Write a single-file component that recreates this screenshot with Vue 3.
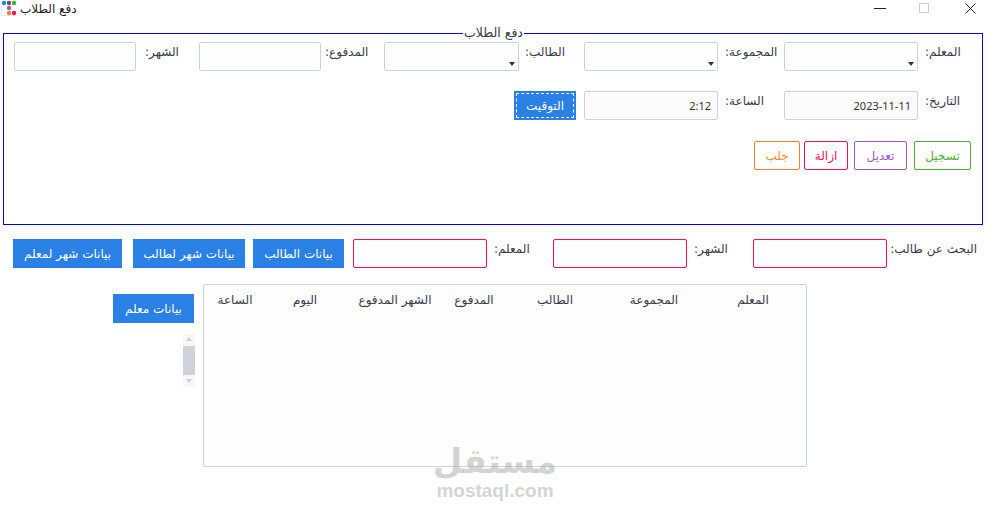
<script setup>
const columns = [
  { t: 'الساعة', w: 62 },
  { t: 'اليوم', w: 78 },
  { t: 'الشهر المدفوع', w: 102 },
  { t: 'المدفوع', w: 56 },
  { t: 'الطالب', w: 106 },
  { t: 'المجموعة', w: 92 },
  { t: 'المعلم', w: 106 },
]
</script>

<template>
  <div class="window">
    <header class="titlebar">
      <svg class="appicon" width="16" height="16" viewBox="0 0 16 16">
        <path d="M.5 2V15.5H15.5" fill="none" stroke="#e6e6e6" />
        <circle cx="3" cy="3" r="2.2" fill="#2a80e4" />
        <circle cx="8" cy="3" r="2.2" fill="#555b66" />
        <circle cx="13" cy="3" r="2.2" fill="#4caf30" />
        <circle cx="8" cy="8" r="2.2" fill="#9b59c4" />
        <circle cx="8" cy="13" r="2.2" fill="#ff7f27" />
        <circle cx="13" cy="13" r="2.2" fill="#f0104f" />
      </svg>
      <span class="title">دفع الطلاب</span>
      <div class="winbtns">
        <svg width="12" height="12" viewBox="0 0 12 12"><path d="M0 6.5H12" stroke="#222" /></svg>
        <svg class="maxi" width="12" height="12" viewBox="0 0 12 12"><rect x="1.5" y="1.5" width="9" height="9" fill="none" stroke="#ccc" /></svg>
        <svg width="12" height="12" viewBox="0 0 12 12"><path d="M.5 1.5L10.5 11.5M10.5 1.5L.5 11.5" stroke="#222" fill="none" /></svg>
      </div>
    </header>

    <fieldset class="group">
      <legend>دفع الطلاب</legend>
      <div class="row r1">
        <div class="box w122"></div>
        <label class="lab w63 p9">الشهر:</label>
        <div class="box w122"></div>
        <label class="lab w63 p4">المدفوع:</label>
        <div class="box combo w135"><i class="tri"></i></div>
        <label class="lab w65 p6">الطالب:</label>
        <div class="box combo w134"><i class="tri"></i></div>
        <label class="lab w66 p7">المجموعة:</label>
        <div class="box combo w134"><i class="tri"></i></div>
        <label class="lab w60 p7">المعلم:</label>
      </div>
      <div class="row r2">
        <button class="primary focus">التوقيت</button>
        <div class="box w134 val">2:12</div>
        <label class="lab w66 p7">الساعة:</label>
        <div class="box w134 val">2023-11-11</div>
        <label class="lab w60 p7">التاريخ:</label>
      </div>
      <div class="row r3">
        <button class="outline orange">جلب</button>
        <button class="outline red">ازالة</button>
        <button class="outline purple">تعديل</button>
        <button class="outline green">تسجيل</button>
      </div>
    </fieldset>

    <div class="searchrow">
      <button class="primary b109">بيانات شهر لمعلم</button>
      <button class="primary b112">بيانات شهر لطالب</button>
      <button class="primary b91">بيانات الطالب</button>
      <div class="box pink"></div>
      <label class="lab w66 p7">المعلم:</label>
      <div class="box pink"></div>
      <label class="lab w66 p7">الشهر:</label>
      <div class="box pink"></div>
      <label class="lab w90 p7">البحث عن طالب:</label>
    </div>

    <div class="lower">
      <div class="side">
        <button class="primary b81">بيانات معلم</button>
        <div class="scroll">
          <span class="arr up"></span>
          <span class="thumb"></span>
          <span class="arr down"></span>
        </div>
      </div>
      <div class="table">
        <div class="thead">
          <span v-for="c in columns" :key="c.t" :style="{ width: c.w + 'px' }">{{ c.t }}</span>
        </div>
      </div>
    </div>

    <div class="watermark">
      <span class="wm-ar">مستقل</span>
      <span class="wm-en">mostaql.com</span>
    </div>
  </div>
</template>

<style>
html, body { margin: 0; background: #fff; }
</style>

<style scoped>
.window {
  position: relative;
  width: 989px;
  height: 511px;
  overflow: hidden;
  background: #fff;
  font-family: "DejaVu Sans", "Noto Sans", sans-serif;
  font-size: 12px;
  color: #3a3a4a;
}
.titlebar {
  height: 18px;
  display: flex;
  align-items: flex-start;
  padding-left: 1px;
}
.appicon { flex: none; }
.title {
  margin: 1px 0 0 3px;
  color: #222;
  line-height: 16px;
}
.winbtns {
  margin-left: auto;
  margin-right: 12px;
  margin-top: 2px;
  display: flex;
}
.maxi { margin: 0 35px 0 32px; }
.group {
  box-sizing: border-box;
  margin: 8px 0 0 3px;
  padding: 0 0 0 10px;
  width: 980px;
  height: 199px;
  border: 1px solid #0000e6;
  position: relative;
  min-width: 0;
}
legend {
  margin: 0 0 0 449px;
  padding: 0 1px;
  line-height: 14px;
  font-size: 12.5px;
  color: #3a3a4a;
}
.row { display: flex; align-items: flex-start; }
.r1 { margin-top: 2px; }
.r2 { margin-top: 20px; padding-left: 500px; }
.r3 { margin-top: 21px; padding-left: 740px; }
.box {
  box-sizing: border-box;
  height: 29px;
  flex: none;
  border: 1px solid #ced2da;
  border-radius: 2px;
  background: #fdfdfd;
}
.w122 { width: 122px; }
.w134 { width: 134px; }
.w135 { width: 135px; }
.combo {
  display: flex;
  justify-content: flex-end;
  align-items: flex-end;
  padding: 0 3px 4px 0;
}
.tri {
  width: 0;
  height: 0;
  border-left: 3.5px solid transparent;
  border-right: 3.5px solid transparent;
  border-top: 4px solid #333;
}
.val {
  font-family: "Noto Sans", sans-serif;
  font-size: 11px;
  line-height: 27px;
  text-align: right;
  padding-right: 6px;
  background: #fcfcfc;
  color: #333;
}
.lab {
  box-sizing: border-box;
  flex: none;
  padding-top: 2px;
  line-height: 17px;
  white-space: nowrap;
  direction: rtl;
  text-align: left;
}
.w60 { width: 60px; }
.w63 { width: 63px; }
.w65 { width: 65px; }
.w66 { width: 66px; }
.w90 { width: 90px; }
.p4 { padding-left: 4px; }
.p6 { padding-left: 6px; }
.p7 { padding-left: 7px; }
.p9 { padding-left: 9px; }
button {
  font-family: inherit;
  font-size: 12px;
  box-sizing: border-box;
  height: 29px;
  padding: 0;
  cursor: pointer;
  flex: none;
}
.primary {
  background: #2a80e4;
  border: none;
  color: #fff;
  position: relative;
}
.b81 { width: 81px; }
.b91 { width: 91px; }
.b109 { width: 109px; }
.b112 { width: 112px; }
.focus {
  width: 62px;
  margin-right: 8px;
}
.focus::after {
  content: "";
  position: absolute;
  inset: 2px;
  border: 1px dashed #fff;
}
.outline {
  background: #fff;
  border: 1px solid;
  border-radius: 2px;
}
.orange { width: 46px; color: #ff8a2a; border-color: #ff7f27; margin-right: 4px; }
.red { width: 44px; color: #f0104f; border-color: #f0104f; margin-right: 6px; }
.purple { width: 53px; color: #9b59c4; border-color: #9b59c4; margin-right: 7px; }
.green { width: 57px; color: #4caf30; border-color: #4caf30; }
.searchrow {
  display: flex;
  align-items: flex-start;
  margin: 14px 0 0 13px;
}
.searchrow .b109 { margin-right: 11px; }
.searchrow .b112 { margin-right: 8px; }
.searchrow .b91 { margin-right: 9px; }
.pink {
  width: 134px;
  border-color: #f0104f;
}
.lower {
  display: flex;
  align-items: flex-start;
  margin: 16px 0 0 113px;
}
.side {
  width: 81px;
  margin-right: 9px;
  padding-top: 10px;
}
.scroll {
  margin: 11px 0 0 70px;
  width: 12px;
  height: 53px;
  display: flex;
  flex-direction: column;
  align-items: center;
  background: #f7f7f7;
}
.thumb {
  width: 12px;
  height: 29px;
  background: #ced2da;
  margin: 5px 0 4px;
  flex: none;
}
.arr { width: 0; height: 0; border-left: 3px solid transparent; border-right: 3px solid transparent; flex: none; }
.up { border-bottom: 4px solid #d0d0d0; margin-top: 3px; }
.down { border-top: 4px solid #d0d0d0; }
.table {
  box-sizing: border-box;
  width: 604px;
  height: 183px;
  border: 1px solid #ced2da;
  border-radius: 2px;
  background: #fdfdfd;
}
.thead {
  display: flex;
  padding-top: 7px;
}
.thead span {
  flex: none;
  text-align: center;
  line-height: 17px;
  white-space: nowrap;
}
.watermark {
  position: absolute;
  left: 400px;
  top: 440px;
  width: 190px;
  display: flex;
  flex-direction: column;
  align-items: center;
  color: rgba(170, 170, 170, 0.5);
  font-weight: 700;
  pointer-events: none;
}
.wm-ar { font-family: "DejaVu Sans", sans-serif; font-size: 34px; line-height: 42px; }
.wm-en { font-family: "Liberation Sans", sans-serif; font-size: 19px; line-height: 18px; }
</style>
